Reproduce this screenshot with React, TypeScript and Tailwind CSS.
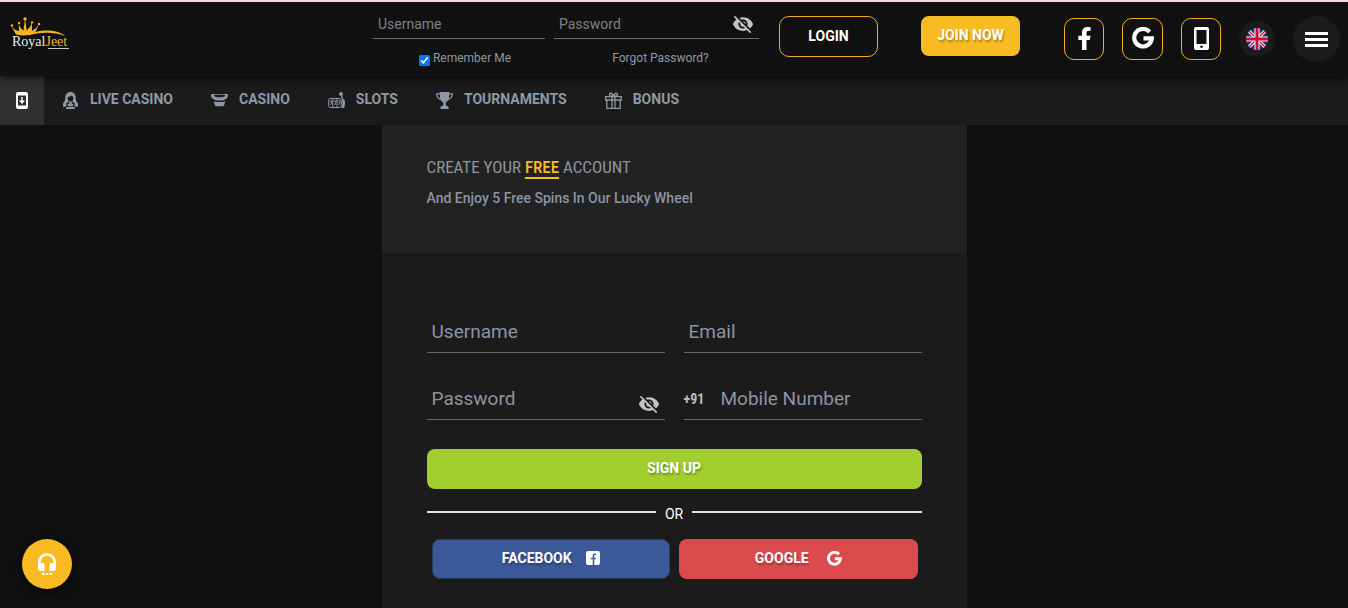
import { useState } from 'react';
import type { ReactNode } from 'react';
import { MdVisibilityOff, MdVisibility } from 'react-icons/md';
import { FaFacebookF } from 'react-icons/fa';

function Logo() {
  return (
    <svg width="62" height="36" viewBox="0 0 62 36" role="img" aria-label="RoyalJeet">
      <path
        d="M6 18.500 L1.500 10.500 Q5 14.500 9 15 L8.800 8 Q10.500 13 13.500 14.500 L15 3 L16.800 14.500 Q20 12 21.800 7 L22 15 Q26 13 28.800 8.500 L25.500 16 C36 13.500 48 14 55 20 C45 16 35 16 25 17.800 C19 19.500 12 20 6 18.500 Z"
        fill="#f7b323"
      />
      <g fill="#f7b323">
        <circle cx="2" cy="9.500" r="1.200" />
        <circle cx="9" cy="7" r="1.200" />
        <circle cx="15" cy="3" r="1.700" />
        <circle cx="22" cy="6.500" r="1.200" />
        <circle cx="29" cy="8" r="1.200" />
      </g>
      <text x="2" y="30" fontSize="14" fontFamily="'Liberation Serif', serif" fill="#ececec">
        Royal<tspan fill="#f7b323">Jeet</tspan>
      </text>
      <path d="M38 32.500 H59" stroke="#c9c9c9" strokeWidth="1" />
    </svg>
  );
}

function GoogleG({ className }: { className?: string }) {
  return (
    <svg viewBox="0 0 22 22" className={className} fill="none" stroke="currentColor" strokeWidth="4.200" aria-hidden="true">
      <path d="M17.600 4.800 A8.800 8.800 0 1 0 19.800 11.300 H11.500" />
    </svg>
  );
}

function PhoneIcon() {
  return (
    <svg width="15" height="23" viewBox="0 0 15 23" aria-hidden="true">
      <path
        fill="#fff"
        fillRule="evenodd"
        d="M2 0h11a2 2 0 0 1 2 2v19a2 2 0 0 1-2 2H2a2 2 0 0 1-2-2V2a2 2 0 0 1 2-2ZM2.500 3v14h10V3ZM7.500 18.500a1.300 1.300 0 1 0 0 2.600 1.300 1.300 0 0 0 0-2.600Z"
      />
    </svg>
  );
}

function InstallIcon() {
  return (
    <svg width="12" height="17" viewBox="0 0 12 17" aria-hidden="true">
      <rect width="12" height="17" rx="2" fill="#fff" />
      <path d="M2 3.500h8v10H2z" fill="#2f2f2f" />
      <path d="M5.300 5h1.400v3.500h2.300L6 12 3 8.500h2.300z" fill="#fff" />
    </svg>
  );
}

function UkFlag() {
  return (
    <svg width="22" height="22" viewBox="0 0 22 22" aria-hidden="true">
      <clipPath id="flag">
        <circle cx="11" cy="11" r="11" />
      </clipPath>
      <g clipPath="url(#flag)">
        <rect width="22" height="22" fill="#21307f" />
        <path d="M0 0 22 22M22 0 0 22" stroke="#eee" strokeWidth="3.400" />
        <path d="M0 0 22 22M22 0 0 22" stroke="#cf1441" strokeWidth="1.300" />
        <path d="M11 0V22M0 11H22" stroke="#eee" strokeWidth="5.200" />
        <path d="M11 0V22M0 11H22" stroke="#cf0a3c" strokeWidth="3" />
      </g>
    </svg>
  );
}

function DealerIcon() {
  return (
    <svg width="17" height="17" viewBox="0 0 17 17" fill="currentColor" aria-hidden="true">
      <path
        fillRule="evenodd"
        d="M8.500 0C5 0 3.200 2.700 3.200 6c0 2.500-.7 3.600-2 5C.7 13 1 14.500 1.700 15.300L4.500 14l-.3-2.700 2.300-1.200V8.500C5.600 7.500 5.500 6 5.800 4.800c1.500 0 3-.5 3.800-1.300.8.7 1.500 1.200 1.700 2 .1 1.200-.1 2.200-.8 3v1.600l2.300 1.200-.3 2.700 2.800 1.300c.7-.8 1-2.300.5-4.300-1.300-1.400-2-2.500-2-5C13.800 2.700 12 0 8.500 0Z"
      />
      <path d="M7.300 9.300h2.400v2l1.800 1.200-.6 1.800H6.100l-.6-1.800 1.800-1.200zM4.500 15h8l.5 2H4z" />
    </svg>
  );
}

function HatIcon() {
  return (
    <svg width="17" height="17" viewBox="0 0 17 17" fill="currentColor" aria-hidden="true">
      <path
        fillRule="evenodd"
        d="M1 2h15c1.200 0 1.200 2 .5 3.200C15.500 7.500 12 8.600 8.500 8.600S1.500 7.500.5 5.200C-.2 4-.2 2 1 2Zm1.500 1.200C2.800 4.700 5.500 5.300 8.500 5.300s5.700-.6 6-2.100c-1.700-.6-10.300-.6-12 0Z"
      />
      <path d="M2.800 9.200c3.300 1.200 8.100 1.200 11.400 0l-.9 3.600c-.2.900-.7 1.400-1.500 1.400H5.200c-.8 0-1.300-.5-1.500-1.400z" />
    </svg>
  );
}

function SlotIcon() {
  return (
    <svg width="17" height="17" viewBox="0 0 17 17" fill="none" stroke="currentColor" aria-hidden="true">
      <path d="M1.500 6.500h10.500c1 1 1.500 2.500 1.500 4.500s-.5 3.500-1.500 4.500H1.500C.7 14.500.5 13 .5 11s.2-3.500 1-4.500ZM4.800 6.500v9M9 6.500v9" />
      <path d="M1.500 9h2.500l-1.500 4M5.800 9h2.500l-1.500 4M9.800 9h2.500l-1.500 4" />
      <circle cx="13" cy="2" r="2" fill="currentColor" stroke="none" />
      <path d="M13.500 3 15 9" strokeWidth="1.400" />
      <path d="M14 7.500h2c1.300 1 1.300 6 0 8.500h-3c1.500-2.500 1.700-6 1-8.500Z" fill="currentColor" stroke="none" />
    </svg>
  );
}

function TrophyIcon() {
  return (
    <svg width="17" height="17" viewBox="0 0 17 17" fill="currentColor" aria-hidden="true">
      <path d="M3.800 0h9.400v4c0 3.500-1.500 5.600-3.500 6.500v2.300c.2 1 1.300 1.500 2.800 1.800V17h-8v-2.400c1.500-.3 2.600-.8 2.800-1.800v-2.300C5.300 9.600 3.800 7.500 3.800 4z" />
      <path d="M4 1.800H.7C.7 4.800 2 6.800 5.300 7.600M13 1.800h3.300c0 3-1.300 5-4.600 5.800" fill="none" stroke="currentColor" strokeWidth="1.300" />
    </svg>
  );
}

function GiftIcon() {
  return (
    <svg width="17" height="17" viewBox="0 0 17 17" fill="none" stroke="currentColor" strokeWidth="1.300" aria-hidden="true">
      <path d="M.7 4.700h15.600v3.300H.7zM1.800 8v8.300h13.400V8M7 4.700v11.600M10 4.700v11.600" />
      <path d="M8.500 4.500C6 4.500 4.200 3.800 4.500 2.200 5 .5 7.700 1 8.500 4.500c.8-3.500 3.500-4 4-2.300.3 1.600-1.500 2.300-4 2.300Z" />
    </svg>
  );
}

function HeadsetIcon() {
  return (
    <svg width="18" height="22" viewBox="0 0 18 22" fill="#fff" aria-hidden="true">
      <path d="M9 0a9 9 0 0 0-9 9v6a3 3 0 0 0 3 3h3.500v-8H2.800V9a6.200 6.200 0 0 1 12.400 0v1h-3.700v8H15a3 3 0 0 0 3-3V9a9 9 0 0 0-9-9ZM4 20h2.500v2H4zM7.800 20h2.500v2H7.800zM11.500 20H14v2h-2.500z" />
    </svg>
  );
}

function FacebookSquare() {
  return (
    <svg width="14" height="14" viewBox="0 0 14 14" aria-hidden="true">
      <rect width="14" height="14" rx="2" fill="#fff" />
      <path d="M10 3.200H8.800c-.8 0-1.300.5-1.300 1.300V14M4.800 7.500h5" stroke="#3b5998" strokeWidth="1.500" fill="none" />
    </svg>
  );
}

const menu: { label: string; icon: ReactNode }[] = [
  { label: 'LIVE CASINO', icon: <DealerIcon /> },
  { label: 'CASINO', icon: <HatIcon /> },
  { label: 'SLOTS', icon: <SlotIcon /> },
  { label: 'TOURNAMENTS', icon: <TrophyIcon /> },
  { label: 'BONUS', icon: <GiftIcon /> },
];

function Header() {
  const [show, setShow] = useState(false);

  return (
    <header className="relative z-10 flex h-[76px] items-start justify-between border-t-2 border-[#f7dbe0] bg-[#111] pl-2.5 pr-2 shadow-[0_2px_8px_rgba(0,0,0,0.7)]">
      <a href="#home" className="mt-3.5">
        <Logo />
      </a>

      <div className="flex items-start">
        <form className="grid grid-cols-[172px_205px] gap-x-[9px] pt-2" onSubmit={(e) => e.preventDefault()}>
          <input
            aria-label="Username"
            placeholder="Username"
            className="h-[29px] min-w-0 border-b border-[#6b6b6b] bg-transparent px-[5px] text-sm text-white outline-none placeholder:text-[#808080]"
          />
          <div className="flex h-[29px] items-center border-b border-[#6b6b6b] pr-[5px]">
            <input
              type={show ? 'text' : 'password'}
              aria-label="Password"
              placeholder="Password"
              className="min-w-0 flex-1 bg-transparent px-[5px] text-sm text-white outline-none placeholder:text-[#808080]"
            />
            <button type="button" aria-label="Show password" onClick={() => setShow(!show)} className="text-[#c4c4c4]">
              {show ? <MdVisibility size={22} /> : <MdVisibilityOff size={22} />}
            </button>
          </div>
          <label className="mt-[11px] flex items-start justify-center gap-[3px] pl-3 text-xs leading-4 text-[#8d98a5]">
            <input type="checkbox" defaultChecked className="mt-[5px] size-[11px]" />
            Remember Me
          </label>
          <a href="#forgot" className="mt-[11px] pl-2 text-center text-xs leading-4 text-[#8d98a5]">
            Forgot Password?
          </a>
        </form>

        <button className="ml-5 mt-3.5 h-[41px] w-[99px] rounded-[10px] border border-[#f0ad1e] pb-0.5 text-sm font-bold text-white">
          LOGIN
        </button>
        <button className="ml-[43px] mt-3.5 h-10 w-[99px] rounded-lg bg-[#f8bb22] pb-0.5 text-sm font-bold text-white [text-shadow:1px_2px_2px_rgba(0,0,0,0.3)]">
          JOIN NOW
        </button>

        <div className="ml-11 mt-3.5 flex h-[46px] items-center gap-[18px] text-white">
          <button aria-label="Log in with Facebook" className="flex h-[42px] w-10 items-center justify-center rounded-[10px] border border-[#f0ad1e] pb-0.5">
            <FaFacebookF size={23} />
          </button>
          <button aria-label="Log in with Google" className="flex h-[42px] w-[41px] items-center justify-center rounded-[10px] border border-[#f0ad1e] pb-0.5">
            <GoogleG className="size-[22px]" />
          </button>
          <button aria-label="Mobile app" className="flex h-[42px] w-10 items-center justify-center rounded-[10px] border border-[#f0ad1e] pb-0.5">
            <PhoneIcon />
          </button>
          <button aria-label="Language" className="flex size-9 items-center justify-center rounded-full bg-[#1b1b1b]">
            <UkFlag />
          </button>
          <button aria-label="Menu" className="flex h-[46px] w-[47px] flex-col items-center justify-center gap-[3px] rounded-full bg-[#1b1b1b]">
            <span className="h-[3px] w-[23px] bg-white" />
            <span className="h-[3px] w-[23px] bg-white" />
            <span className="h-[3px] w-[23px] bg-white" />
          </button>
        </div>
      </div>
    </header>
  );
}

function Nav() {
  return (
    <nav className="flex h-[49px] bg-[#1b1b1b] text-[#8d99a6]">
      <a href="#install" aria-label="Install app" className="flex w-11 items-center justify-center bg-[#303030]">
        <InstallIcon />
      </a>
      <ul className="flex items-center gap-[38px] pl-[18px]">
        {menu.map((item) => (
          <li key={item.label}>
            <a href="#menu" className="flex items-center gap-[11px] text-sm leading-5 font-bold">
              {item.icon}
              <span className="pb-[3px]">{item.label}</span>
            </a>
          </li>
        ))}
      </ul>
    </nav>
  );
}

const fieldRow = 'flex h-[67px] items-end border-b border-[#666]';
const fieldInput =
  'h-[42px] min-w-0 flex-1 bg-transparent px-[5px] text-[19px] text-white outline-none placeholder:text-[#8c94a2]';

function SignUp() {
  const [show, setShow] = useState(false);

  return (
    <main className="mx-auto flex w-full max-w-[585px] flex-1 flex-col bg-[#1b1b1b]">
      <div className="h-32 bg-[#222] px-[45px] pt-7 text-[#8c94a2]">
        <h1 className="font-['Roboto_Condensed','Roboto',sans-serif] text-[17px] leading-7">
          CREATE YOUR <span className="font-medium text-[#f8bb22] underline decoration-2 underline-offset-4">FREE</span> ACCOUNT
        </h1>
        <p className="mt-[7px] text-sm leading-5 font-medium">And Enjoy 5 Free Spins In Our Lucky Wheel</p>
      </div>

      <form className="px-[45px] pt-[33px] pb-8" onSubmit={(e) => e.preventDefault()}>
        <div className="grid grid-cols-2 gap-x-[19px]">
          <div className={fieldRow}>
            <input aria-label="Username" placeholder="Username" className={fieldInput} />
          </div>
          <div className={fieldRow}>
            <input type="email" aria-label="Email" placeholder="Email" className={fieldInput} />
          </div>
          <div className={fieldRow}>
            <input
              type={show ? 'text' : 'password'}
              aria-label="Password"
              placeholder="Password"
              className={fieldInput}
            />
            <button type="button" aria-label="Show password" onClick={() => setShow(!show)} className="mr-[5px] mb-1 text-[#c4c4c4]">
              {show ? <MdVisibility size={22} /> : <MdVisibilityOff size={22} />}
            </button>
          </div>
          <div className={fieldRow}>
            <span className="mb-2 w-8 font-['Roboto_Condensed','Roboto',sans-serif] text-sm leading-6 font-bold text-[#bbb]">
              +91
            </span>
            <input type="tel" aria-label="Mobile Number" placeholder="Mobile Number" className={fieldInput} />
          </div>
        </div>

        <button className="mt-[29px] h-10 w-full rounded-lg bg-[#a1cf2d] pb-0.5 text-sm font-bold text-white [text-shadow:1px_2px_2px_rgba(0,0,0,0.3)]">
          SIGN UP
        </button>

        <div className="mt-[15px] flex items-center gap-[9px] text-sm leading-5 text-white">
          <span className="mb-1 h-0.5 flex-1 bg-[#e6dfe2]" />
          OR
          <span className="mb-1 h-0.5 flex-1 bg-[#e6dfe2]" />
        </div>

        <div className="mt-[15px] grid grid-cols-2 gap-[9px] pr-1 pl-[5px] text-sm font-bold text-white">
          <button
            type="button"
            className="flex h-10 items-center justify-center gap-3.5 rounded-lg border border-[#24405f] bg-[#3b5998] pb-0.5 [text-shadow:1px_2px_2px_rgba(0,0,0,0.3)]"
          >
            FACEBOOK
            <FacebookSquare />
          </button>
          <button
            type="button"
            className="flex h-10 items-center justify-center gap-[18px] rounded-lg bg-[#db4a4d] pb-0.5 [text-shadow:1px_2px_2px_rgba(0,0,0,0.3)]"
          >
            GOOGLE
            <GoogleG className="size-[15px]" />
          </button>
        </div>
      </form>
    </main>
  );
}

export default function App() {
  return (
    <div className="flex min-h-screen flex-col bg-[#101010] font-['Roboto',sans-serif]">
      <Header />
      <Nav />
      <SignUp />
      <button
        aria-label="Live support"
        className="fixed bottom-[19px] left-[22px] z-20 flex size-[50px] items-center justify-center rounded-full bg-[#f8bb22] shadow-[0_3px_10px_rgba(0,0,0,0.6)]"
      >
        <HeadsetIcon />
      </button>
    </div>
  );
}
